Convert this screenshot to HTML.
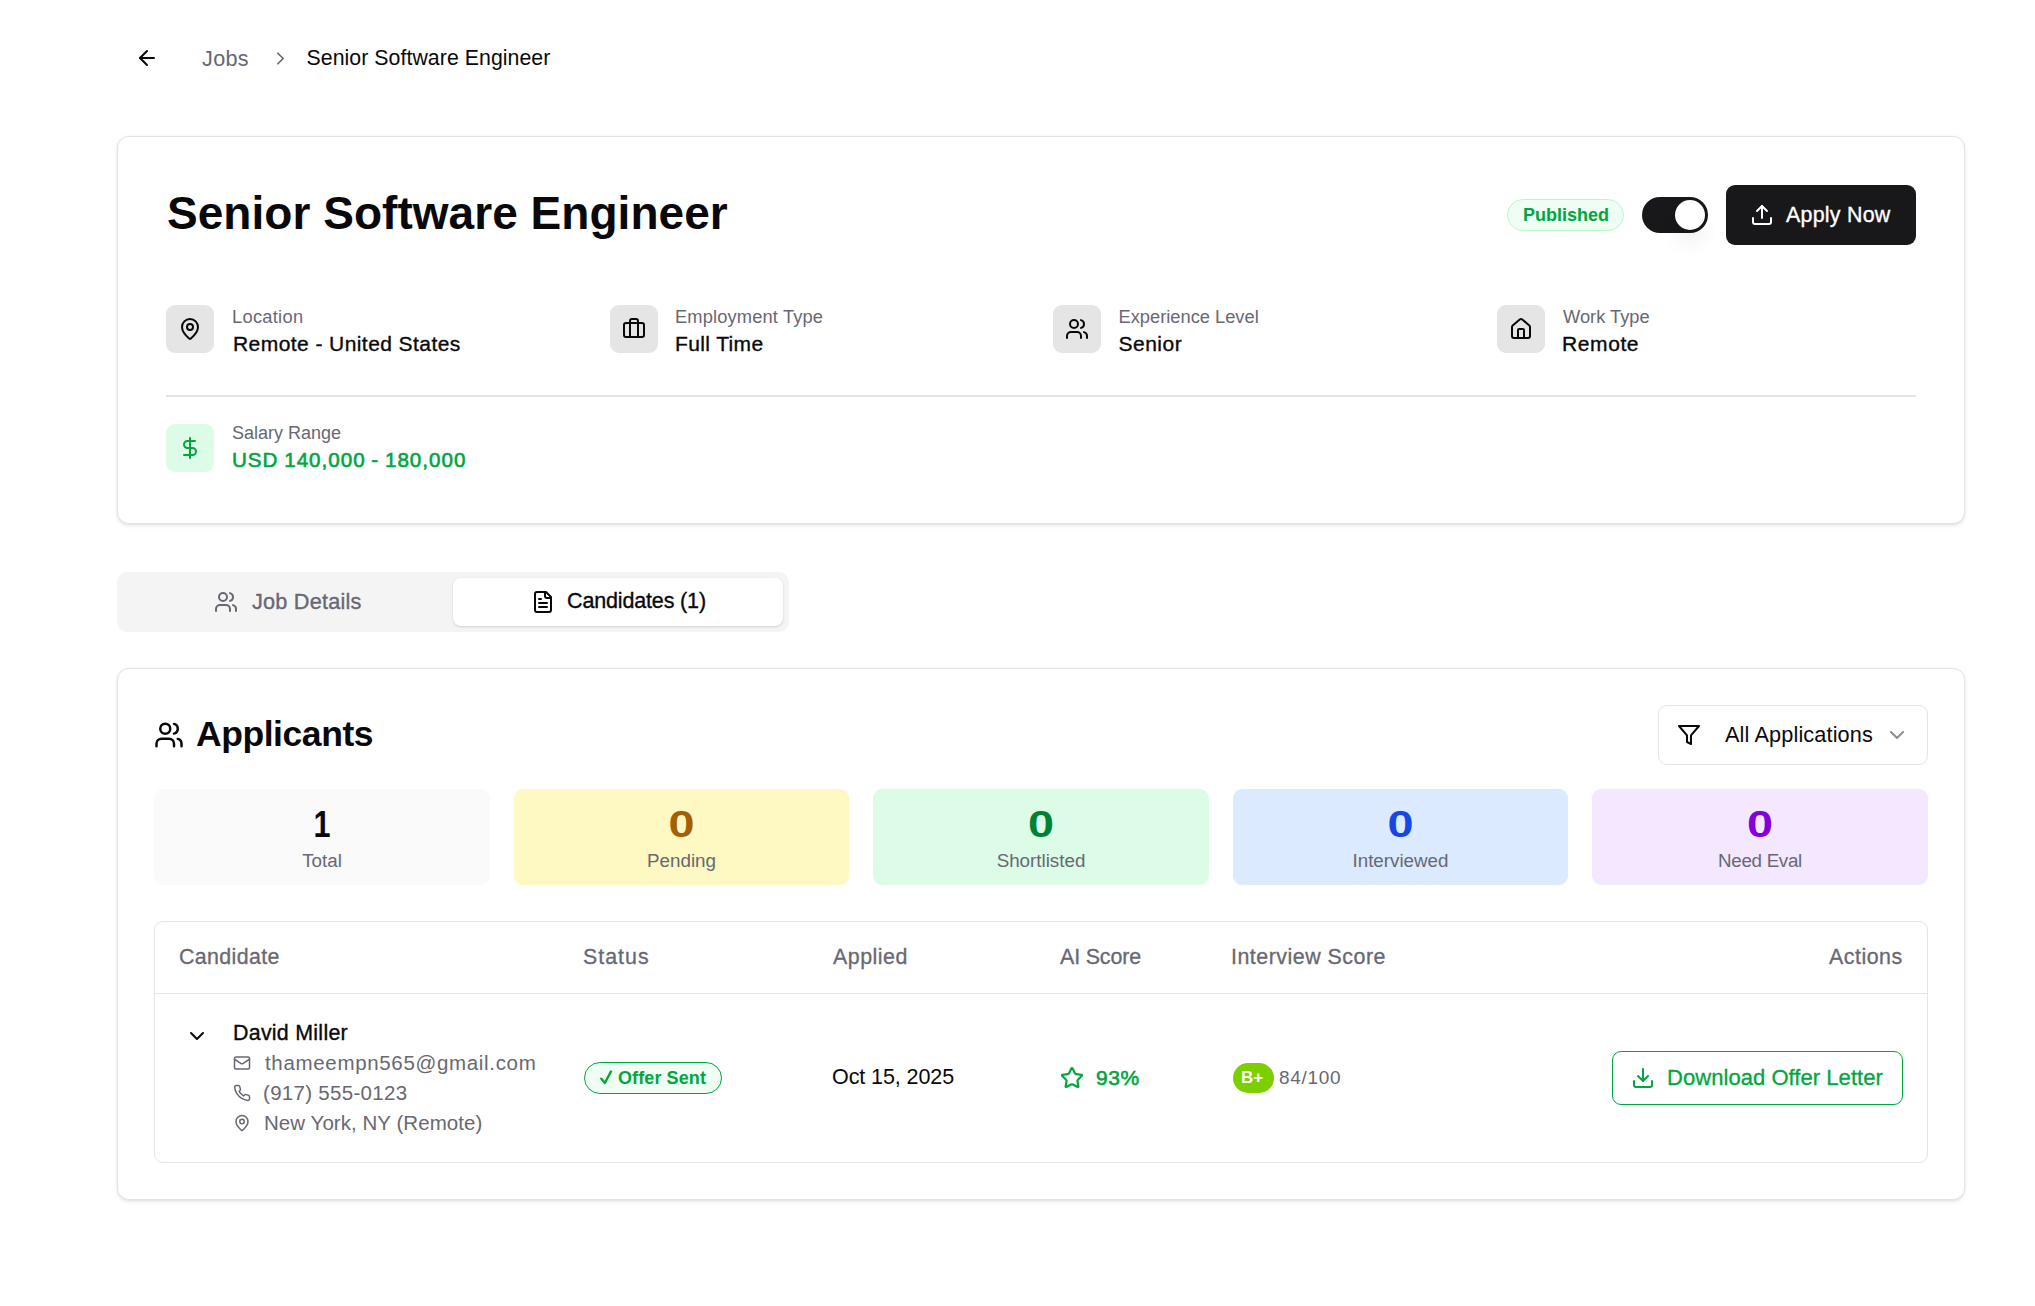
<!DOCTYPE html>
<html>
<head>
<meta charset="utf-8">
<style>
html,body{margin:0;padding:0;background:#ffffff;width:2035px;height:1306px;overflow:hidden;}
body{position:relative;font-family:"Liberation Sans",sans-serif;color:#09090b;}
.t{position:absolute;white-space:nowrap;line-height:1;}
.md{-webkit-text-stroke:0.35px currentColor;}
.ic{position:absolute;fill:none;stroke:currentColor;stroke-width:2;stroke-linecap:round;stroke-linejoin:round;}
.card{position:absolute;box-sizing:border-box;border:1px solid #e4e4e7;border-radius:12px;background:#fff;box-shadow:0 1.5px 4px rgba(0,0,0,0.08),0 1px 2px rgba(0,0,0,0.05);}
.ibox{position:absolute;width:48px;height:48px;border-radius:9px;background:#e5e5e5;top:305px;}
.lbl{font-size:18.3px;color:#686873;top:307.5px;}
.val{font-size:21px;color:#09090b;top:333.2px;}
.stat{position:absolute;top:789px;height:96px;border-radius:9px;}
.stat .n{position:absolute;left:0;right:0;text-align:center;top:806.5px;font-size:36px;font-weight:700;line-height:1;transform:scaleX(1.3);}
.stat .l{position:absolute;left:0;right:0;text-align:center;font-size:18.8px;line-height:1;color:#686873;}
.th{font-size:21.4px;color:#686873;top:947.2px;-webkit-text-stroke:0.3px #686873;}
</style>
</head>
<body>

<!-- breadcrumb -->
<svg class="ic" style="left:135px;top:46px;color:#09090b" width="24" height="24" viewBox="0 0 24 24"><path d="m12 19-7-7 7-7"/><path d="M19 12H5"/></svg>
<span class="t" style="left:202px;top:47.7px;font-size:21.6px;letter-spacing:0.33px;color:#686873;">Jobs</span>
<svg class="ic" style="left:270px;top:47.6px;color:#686873" width="21" height="21" viewBox="0 0 24 24"><path d="m9 18 6-6-6-6"/></svg>
<span class="t" style="left:306.5px;top:47.7px;font-size:21.3px;letter-spacing:0.05px;color:#09090b;">Senior Software Engineer</span>

<!-- card 1 -->
<div class="card" style="left:117px;top:136px;width:1848px;height:388px;"></div>
<span class="t" style="left:167px;top:189.5px;font-size:46px;font-weight:700;letter-spacing:0.04px;">Senior Software Engineer</span>

<div style="position:absolute;left:1507px;top:199px;width:117px;height:32px;box-sizing:border-box;border:1px solid #b9f8cf;background:#f0fdf4;border-radius:16px;"></div>
<span class="t" style="left:1523px;top:205.8px;font-size:18px;font-weight:700;color:#00a63e;">Published</span>

<div style="position:absolute;left:1642px;top:197px;width:66px;height:36px;background:#18181b;border-radius:18px;"></div>
<div style="position:absolute;left:1675px;top:200px;width:30px;height:30px;background:#fff;border-radius:15px;box-shadow:0 15px 22px -4.5px rgba(0,0,0,0.1),0 6px 9px -6px rgba(0,0,0,0.1);"></div>

<div style="position:absolute;left:1726px;top:185px;width:190px;height:60px;background:#18181b;border-radius:9px;"></div>
<svg class="ic" style="left:1750px;top:203px;color:#fff" width="24" height="24" viewBox="0 0 24 24"><path d="M21 15v4a2 2 0 0 1-2 2H5a2 2 0 0 1-2-2v-4"/><polyline points="17 8 12 3 7 8"/><line x1="12" x2="12" y1="3" y2="15"/></svg>
<span class="t" style="left:1786px;top:205px;font-size:21.4px;letter-spacing:0.25px;color:#fff;-webkit-text-stroke:0.35px #fff;">Apply Now</span>

<!-- info items -->
<div class="ibox" style="left:166px;"></div>
<svg class="ic" style="left:178px;top:317px;" width="24" height="24" viewBox="0 0 24 24"><path d="M20 10c0 4.993-5.539 10.193-7.399 11.799a1 1 0 0 1-1.202 0C9.539 20.193 4 14.993 4 10a8 8 0 0 1 16 0"/><circle cx="12" cy="10" r="3"/></svg>
<span class="t lbl" style="left:232px;letter-spacing:0.28px;">Location</span>
<span class="t val md" style="left:233px;letter-spacing:0.43px;">Remote - United States</span>

<div class="ibox" style="left:610px;"></div>
<svg class="ic" style="left:622px;top:317px;" width="24" height="24" viewBox="0 0 24 24"><path d="M16 20V4a2 2 0 0 0-2-2h-4a2 2 0 0 0-2 2v16"/><rect width="20" height="14" x="2" y="6" rx="2"/></svg>
<span class="t lbl" style="left:675px;letter-spacing:0.14px;">Employment Type</span>
<span class="t val md" style="left:675px;letter-spacing:0.37px;">Full Time</span>

<div class="ibox" style="left:1053px;"></div>
<svg class="ic" style="left:1065px;top:317px;" width="24" height="24" viewBox="0 0 24 24"><path d="M16 21v-2a4 4 0 0 0-4-4H6a4 4 0 0 0-4 4v2"/><circle cx="9" cy="7" r="4"/><path d="M22 21v-2a4 4 0 0 0-3-3.87"/><path d="M16 3.13a4 4 0 0 1 0 7.75"/></svg>
<span class="t lbl" style="left:1118.5px;">Experience Level</span>
<span class="t val md" style="left:1118.5px;letter-spacing:0.5px;">Senior</span>

<div class="ibox" style="left:1497px;"></div>
<svg class="ic" style="left:1509px;top:317px;" width="24" height="24" viewBox="0 0 24 24"><path d="M15 21v-8a1 1 0 0 0-1-1h-4a1 1 0 0 0-1 1v8"/><path d="M3 10a2 2 0 0 1 .709-1.528l7-5.999a2 2 0 0 1 2.582 0l7 5.999A2 2 0 0 1 21 10v9a2 2 0 0 1-2 2H5a2 2 0 0 1-2-2z"/></svg>
<span class="t lbl" style="left:1563px;">Work Type</span>
<span class="t val md" style="left:1562px;letter-spacing:0.6px;">Remote</span>

<div style="position:absolute;left:166px;top:395px;width:1750px;height:1.5px;background:#e4e4e7;"></div>

<div class="ibox" style="left:166px;top:424px;background:#dcfce7;"></div>
<svg class="ic" style="left:178px;top:436px;color:#00a63e" width="24" height="24" viewBox="0 0 24 24"><line x1="12" x2="12" y1="2" y2="22"/><path d="M17 5H9.5a3.5 3.5 0 0 0 0 7h5a3.5 3.5 0 0 1 0 7H6"/></svg>
<span class="t" style="left:232px;top:423.8px;font-size:18px;color:#686873;">Salary Range</span>
<span class="t" style="left:232px;top:450px;font-size:20.6px;font-weight:400;letter-spacing:1px;word-spacing:-1px;-webkit-text-stroke:0.6px #00a63e;color:#00a63e;">USD 140,000 - 180,000</span>

<!-- tabs -->
<div style="position:absolute;left:117px;top:572px;width:672px;height:60px;background:#f4f4f5;border-radius:10px;"></div>
<div style="position:absolute;left:453px;top:578px;width:330px;height:48px;background:#fff;border-radius:8px;box-shadow:0 1px 3px rgba(0,0,0,0.1),0 1px 2px rgba(0,0,0,0.06);"></div>
<svg class="ic" style="left:214px;top:590px;color:#686873" width="24" height="24" viewBox="0 0 24 24"><path d="M16 21v-2a4 4 0 0 0-4-4H6a4 4 0 0 0-4 4v2"/><circle cx="9" cy="7" r="4"/><path d="M22 21v-2a4 4 0 0 0-3-3.87"/><path d="M16 3.13a4 4 0 0 1 0 7.75"/></svg>
<span class="t" style="left:252px;top:591.3px;font-size:21.7px;letter-spacing:0.2px;color:#686873;-webkit-text-stroke:0.35px #686873;">Job Details</span>
<svg class="ic" style="left:531px;top:590px;color:#09090b" width="24" height="24" viewBox="0 0 24 24"><path d="M15 2H6a2 2 0 0 0-2 2v16a2 2 0 0 0 2 2h12a2 2 0 0 0 2-2V7Z"/><path d="M14 2v4a2 2 0 0 0 2 2h4"/><path d="M10 9H8"/><path d="M16 13H8"/><path d="M16 17H8"/></svg>
<span class="t" style="left:567px;top:591.3px;font-size:21.5px;letter-spacing:-0.15px;color:#09090b;-webkit-text-stroke:0.35px #09090b;">Candidates (1)</span>

<!-- card 2 -->
<div class="card" style="left:117px;top:668px;width:1848px;height:532px;"></div>
<svg class="ic" style="left:153.75px;top:719.5px;stroke-width:2;" width="30" height="30" viewBox="0 0 24 24"><path d="M16 21v-2a4 4 0 0 0-4-4H6a4 4 0 0 0-4 4v2"/><circle cx="9" cy="7" r="4"/><path d="M22 21v-2a4 4 0 0 0-3-3.87"/><path d="M16 3.13a4 4 0 0 1 0 7.75"/></svg>
<span class="t" style="left:196px;top:717.4px;font-size:35.5px;font-weight:700;letter-spacing:-0.44px;">Applicants</span>

<div style="position:absolute;left:1658px;top:705px;width:270px;height:60px;box-sizing:border-box;border:1px solid #e4e4e7;border-radius:9px;background:#fff;"></div>
<svg class="ic" style="left:1677px;top:723px;" width="24" height="24" viewBox="0 0 24 24"><polygon points="22 3 2 3 10 12.46 10 19 14 21 14 12.46 22 3"/></svg>
<span class="t" style="left:1725px;top:723.6px;font-size:21.7px;letter-spacing:0.13px;">All Applications</span>
<svg class="ic" style="left:1885px;top:723px;color:#71717b;opacity:0.8" width="24" height="24" viewBox="0 0 24 24"><path d="m6 9 6 6 6-6"/></svg>

<!-- stats -->
<div class="stat" style="left:154px;width:336px;background:#fafafa;"><div class="n" style="top:17.5px;color:#09090b;transform:scaleX(0.85);">1</div><div class="l" style="top:63px;">Total</div></div>
<div class="stat" style="left:514px;width:335px;background:#fef9c2;"><div class="n" style="top:17.5px;color:#a65f00;">0</div><div class="l" style="top:63px;">Pending</div></div>
<div class="stat" style="left:873px;width:336px;background:#dcfce7;"><div class="n" style="top:17.5px;color:#008236;">0</div><div class="l" style="top:63px;">Shortlisted</div></div>
<div class="stat" style="left:1233px;width:335px;background:#dbeafe;"><div class="n" style="top:17.5px;color:#1447e6;">0</div><div class="l" style="top:63px;">Interviewed</div></div>
<div class="stat" style="left:1592px;width:336px;background:#f3e8ff;"><div class="n" style="top:17.5px;color:#8200db;">0</div><div class="l" style="top:63px;letter-spacing:-0.3px;">Need Eval</div></div>

<!-- table -->
<div style="position:absolute;left:154px;top:921px;width:1774px;height:242px;box-sizing:border-box;border:1px solid #e4e4e7;border-radius:9px;"></div>
<div style="position:absolute;left:155px;top:993px;width:1772px;height:1px;background:#e4e4e7;"></div>
<span class="t th" style="left:179px;letter-spacing:0.37px;">Candidate</span>
<span class="t th" style="left:583px;letter-spacing:1px;">Status</span>
<span class="t th" style="left:833px;letter-spacing:0.5px;">Applied</span>
<span class="t th" style="left:1060px;letter-spacing:-0.14px;">AI Score</span>
<span class="t th" style="left:1231px;letter-spacing:0.5px;">Interview Score</span>
<span class="t th" style="left:1829px;letter-spacing:0.5px;">Actions</span>

<svg class="ic" style="left:185px;top:1024px;" width="24" height="24" viewBox="0 0 24 24"><path d="m6 9 6 6 6-6"/></svg>
<span class="t" style="left:233px;top:1023.3px;font-size:21.4px;letter-spacing:0.27px;-webkit-text-stroke:0.35px #09090b;">David Miller</span>
<svg class="ic" style="left:233.25px;top:1053.75px;color:#686873" width="18" height="18" viewBox="0 0 24 24"><rect width="20" height="16" x="2" y="4" rx="2"/><path d="m22 7-8.97 5.7a1.94 1.94 0 0 1-2.06 0L2 7"/></svg>
<span class="t" style="left:265px;top:1052.6px;font-size:20.5px;letter-spacing:0.67px;color:#686873;">thameempn565@gmail.com</span>
<svg class="ic" style="left:233.25px;top:1084.25px;color:#686873" width="18" height="18" viewBox="0 0 24 24"><path d="M22 16.92v3a2 2 0 0 1-2.18 2 19.79 19.79 0 0 1-8.63-3.07 19.5 19.5 0 0 1-6-6 19.790 19.790 0 0 1-3.07-8.67A2 2 0 0 1 4.11 2h3a2 2 0 0 1 2 1.72 12.84 12.84 0 0 0 .7 2.81 2 2 0 0 1-.45 2.11L8.09 9.91a16 16 0 0 0 6 6l1.27-1.27a2 2 0 0 1 2.11-.45 12.84 12.84 0 0 0 2.81.7A2 2 0 0 1 22 16.92z"/></svg>
<span class="t" style="left:263px;top:1082.6px;font-size:20.5px;letter-spacing:0.3px;color:#686873;">(917) 555-0123</span>
<svg class="ic" style="left:232.75px;top:1114.25px;color:#686873" width="18" height="18" viewBox="0 0 24 24"><path d="M20 10c0 4.993-5.539 10.193-7.399 11.799a1 1 0 0 1-1.202 0C9.539 20.193 4 14.993 4 10a8 8 0 0 1 16 0"/><circle cx="12" cy="10" r="3"/></svg>
<span class="t" style="left:264px;top:1112.6px;font-size:20.5px;letter-spacing:0.05px;color:#686873;">New York, NY (Remote)</span>

<div style="position:absolute;left:584px;top:1062px;width:138px;height:32px;box-sizing:border-box;border:1.5px solid #00a63e;background:#f0fdf4;border-radius:16px;"></div>
<svg style="position:absolute;left:596px;top:1066px;" width="20" height="22" viewBox="596 1066 20 22"><path d="M601.2 1078.6 L604.9 1083 L611 1071.4" fill="none" stroke="#00a63e" stroke-width="2.3" stroke-linecap="round" stroke-linejoin="round"/></svg>
<span class="t" style="left:618px;top:1068.8px;font-size:18px;font-weight:700;color:#00a63e;letter-spacing:0.1px;">Offer Sent</span>

<span class="t" style="left:832px;top:1067.2px;font-size:21.5px;letter-spacing:-0.09px;">Oct 15, 2025</span>

<svg class="ic" style="left:1060px;top:1066px;color:#00a63e;stroke-width:2.2" width="24" height="24" viewBox="0 0 24 24"><path d="M11.525 2.295a.53.53 0 0 1 .95 0l2.31 4.679a2.123 2.123 0 0 0 1.595 1.16l5.166.756a.53.53 0 0 1 .294.904l-3.736 3.638a2.123 2.123 0 0 0-.611 1.878l.882 5.14a.53.53 0 0 1-.771.56l-4.618-2.428a2.122 2.122 0 0 0-1.973 0L6.396 21.01a.53.53 0 0 1-.77-.56l.881-5.139a2.122 2.122 0 0 0-.611-1.879L2.160 9.795a.53.53 0 0 1 .294-.906l5.165-.755a2.122 2.122 0 0 0 1.597-1.16z"/></svg>
<span class="t" style="left:1096px;top:1066.7px;font-size:21px;font-weight:400;letter-spacing:0.6px;-webkit-text-stroke:0.6px #00a63e;color:#00a63e;">93%</span>

<div style="position:absolute;left:1233px;top:1063px;width:41px;height:30px;background:#7ccf00;border-radius:15px;"></div>
<span class="t" style="left:1241px;top:1069px;font-size:17px;font-weight:700;color:#fff;">B+</span>
<span class="t" style="left:1279px;top:1067.5px;font-size:19px;letter-spacing:0.7px;color:#686873;">84/100</span>

<div style="position:absolute;left:1612px;top:1051px;width:291px;height:54px;box-sizing:border-box;border:1.5px solid #00a63e;border-radius:9px;background:#fff;"></div>
<svg class="ic" style="left:1631px;top:1066px;color:#00a63e" width="24" height="24" viewBox="0 0 24 24"><path d="M21 15v4a2 2 0 0 1-2 2H5a2 2 0 0 1-2-2v-4"/><polyline points="7 10 12 15 17 10"/><line x1="12" x2="12" y1="15" y2="3"/></svg>
<span class="t" style="left:1667px;top:1066.5px;font-size:22px;letter-spacing:0.05px;color:#00a63e;-webkit-text-stroke:0.3px #00a63e;">Download Offer Letter</span>

</body>
</html>
